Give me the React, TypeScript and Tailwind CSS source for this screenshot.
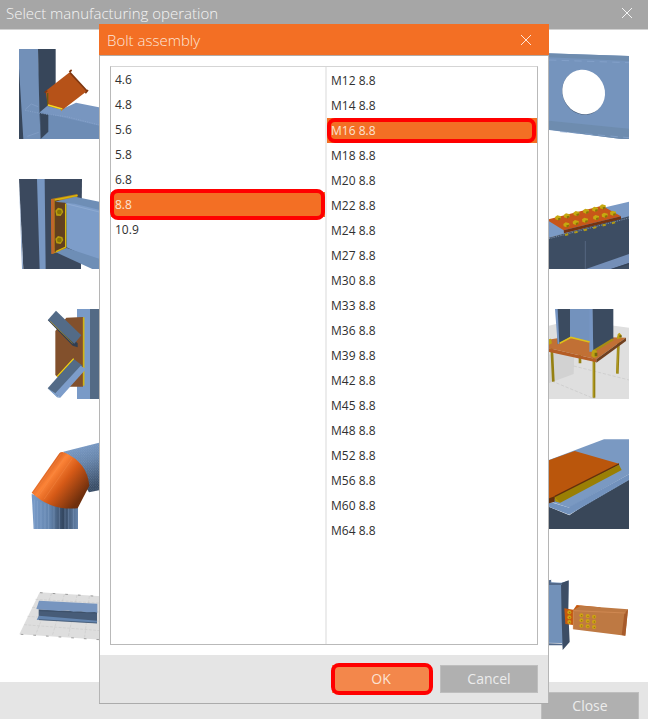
import { useState } from "react";
import type { ReactNode } from "react";

const GRADES = ["4.6", "4.8", "5.6", "5.8", "6.8", "8.8", "10.9"];
const DIAMETERS = [12, 14, 16, 18, 20, 22, 24, 27, 30, 33, 36, 39, 42, 45, 48, 52, 56, 60, 64];

function Thumb({ label, viewBox, children }: { label: string; viewBox: string; children: ReactNode }) {
  return (
    <button type="button" aria-label={label} className="block size-[90px]">
      <svg viewBox={viewBox} className="size-full" aria-hidden="true">
        {children}
      </svg>
    </button>
  );
}

function CloseIcon() {
  return (
    <svg viewBox="0 0 12 12" className="size-3" fill="none" stroke="currentColor" aria-hidden="true">
      <path d="M1 1 11 11M11 1 1 11" />
    </svg>
  );
}

function StubThumb() {
  return (
    <Thumb label="Stub" viewBox="57 27 270 270">
      <path fill="#7290b8" d="M57 27h58l7 271H57z" />
      <path fill="#37465a" d="M57 85l13 213H57zM114 27h53v135l-22 40v75l-23 21-4-90z" />
      <path fill="#7896c0" d="M120 216l25-21 42 12 41-19 99 20v90H122z" />
      <path fill="#6d8cb5" d="M120 216l207 48v34H122z" />
      <path fill="#37465a" d="M120 219l25 5v51l-23 22z" />
      <path fill="none" stroke="#91abd0" strokeDasharray="3 4" strokeWidth="2" d="M76 211l44 9 80 10 110 28" />
      <path fill="none" stroke="#86a1c8" strokeWidth="2" d="M76 208l18-16 20 8M82 289l34-12" />
      <path fill="#b65218" d="M137 153l72-56 52 56-73 56-45-11z" />
      <path fill="none" stroke="#803811" strokeWidth="5" d="M134 158l8-6M208 96l7-6M256 160l8-10M210 98l51 55" />
      <path fill="none" stroke="#675a15" strokeWidth="4" d="M143 159v35" />
      <path fill="none" stroke="#f1db24" strokeWidth="4" d="M144 195l43 12" />
      <path fill="#c78d22" d="M180 206l8 2-3 6z" />
    </Thumb>
  );
}

function OpeningThumb() {
  return (
    <Thumb label="Opening" viewBox="-3 27 270 270">
      <path fill="#7594bd" d="M-3 39l270 9v251l-40-4-230-29z" />
      <path fill="#6e8caf" d="M-3 39l270 9v15L-3 50zM-3 239l270 27v33l-30-3L-3 265z" />
      <path fill="none" stroke="#8aa6ce" strokeWidth="2" strokeDasharray="22 16" d="M27 60l240 8M60 275l207 18" />
      <ellipse cx="129" cy="158" rx="61" ry="68" fill="#465b76" transform="rotate(-28 129 158)" />
      <ellipse cx="131" cy="156" rx="63" ry="68" fill="#fff" transform="rotate(-28 131 156)" />
    </Thumb>
  );
}

function EndPlateThumb() {
  return (
    <Thumb label="End plate" viewBox="57 27 270 270">
      <path fill="#3b495e" d="M57 27h189l-3 271H70z" />
      <path fill="#7897c2" d="M111 27h23l3 271h-18zM57 29l12 269h-3z" />
      <path fill="#bd8316" d="M153 87l79-15v13l-35 10v145l-42 12z" />
      <path fill="#62401f" d="M164 88l31 8v138l-31 12z" />
      <path fill="#c0662c" d="M153 87l9 1v162l-8 2z" />
      <path fill="#7d9dc9" d="M199 98l128 2v192l-127-60z" />
      <path fill="#6e8eb6" d="M165 95l60-15 102 21v26l-103-26zM168 247l32-13 127 42v22h-48z" />
      <path fill="none" stroke="#96b0d6" strokeWidth="2" d="M198 101l100 25" />
      <path fill="none" stroke="#d7b80c" strokeWidth="4" d="M164 90l69-14M197 102v129l-29 14" />
      <g fill="#b69b0d">
        <path d="M166 122l8-9 12 3 4 10-8 12-13-1zM166 206l8-8 13 3 3 9-8 12-13-2z" />
      </g>
      <g fill="#887306">
        <circle cx="178" cy="126" r="7" />
        <circle cx="178" cy="210" r="7" />
      </g>
    </Thumb>
  );
}

function SpliceThumb() {
  return (
    <Thumb label="Plate to plate" viewBox="-3 -33 270 270">
      <path fill="#7b9ac5" d="M-3 98L267 35v45L-3 151z" />
      <path fill="#3d4d63" d="M-3 151L267 79v158H-3z" />
      <path fill="none" stroke="#91a8c7" strokeDasharray="4 3" strokeWidth="2" d="M27 146L267 84" />
      <path fill="#748fb8" d="M138 237l129-45v27l-54 18z" />
      <path fill="#35445a" d="M213 237l54-18v4l-42 14z" />
      <path stroke="#60738f" strokeWidth="2" d="M136 153v84" />
      <path fill="#c75619" d="M20 89l166-42 57 32-172 42z" />
      <path fill="#743211" d="M71 121l172-42v8L72 130z" />
      {[
        [54, 84], [80, 78], [109, 71], [138, 64], [165, 58], [188, 51],
        [79, 105], [107, 98], [135, 91], [168, 83], [194, 76], [219, 70],
      ].map(([x, y]) => (
        <g key={`${x}-${y}`}>
          <path fill="#c6a910" d={`M${x - 9} ${y - 3}l7-5 11 3v7l-8 5-9-3z`} />
          <path fill="#887408" d={`M${x} ${y + 1}l8-2v5l-7 4z`} />
        </g>
      ))}
      <path fill="none" stroke="#b29a15" strokeWidth="6" strokeDasharray="10 19" d="M75 135l151-38" />
    </Thumb>
  );
}

function GussetThumb() {
  return (
    <Thumb label="Gusset plate" viewBox="57 27 270 270">
      <path fill="#799ac7" d="M231 27h39v273h-39z" />
      <path fill="#536a85" d="M270 27h57v273h-57z" />
      <path fill="#82502c" d="M166 93l33-40 50-2v209h-45l-38-35z" />
      <path stroke="#d1b414" strokeWidth="5" d="M251 52v205" />
      <path fill="#303e50" d="M143 60l9-2 81 72v12l-15-5z" />
      <path fill="#536b87" d="M144 59l24-27 76 74-21 25z" />
      <path fill="none" stroke="#bf9b1b" strokeWidth="2" d="M151 64l67 66" />
      <path fill="#536b87" d="M143 265l78-88 27 20-75 95z" />
      <path fill="#7d9dca" d="M166 280l76-83 16 10-78 87z" />
      <path fill="#82a3ce" d="M143 265l23 15 14 14-9-2z" />
      <path fill="none" stroke="#f0d515" strokeWidth="4" d="M171 230l50-54" />
    </Thumb>
  );
}

function AnchorThumb() {
  return (
    <Thumb label="Base plate" viewBox="-3 27 270 270">
      <path fill="#dfdfdf" d="M-3 85l98-25 172 23v215H-3z" />
      <path fill="#d2d2d2" d="M-3 169l106-19-2 72L-3 260z" />
      <path fill="none" stroke="#c7c7c7" strokeWidth="2" strokeDasharray="10 5" d="M101 198l166 42M35 243l130 54" />
      <g stroke="#958012" strokeWidth="8">
        <path d="M35 140l5 105M162 170v123M236 110l-4 111M120 160v30" />
      </g>
      <path stroke="#c2ab25" strokeWidth="2" d="M160 185v107M235 125l-4 95" />
      <path fill="#c17035" d="M-3 124l96-16 165 5-89 65L-3 137z" />
      <path fill="#b55d25" d="M-3 137l172 41v9L-3 149z" />
      <path fill="#70401f" d="M169 178l89-65v10l-89 65z" />
      <path fill="#7392bd" d="M88 27h70v100l-70-15z" />
      <path fill="#3b4b60" d="M50 27h40v84l-37 22zM157 27h63v89l-62 39z" />
      <path fill="#7696c4" d="M45 27h8l5 104-5 2zM148 27h9l3 128h-12z" />
      <path fill="none" stroke="#ddc11a" strokeWidth="5" d="M59 130l34-18 56 14" />
      <path fill="none" stroke="#a78d15" strokeWidth="7" d="M165 151l54-33" />
      <path fill="#bda313" d="M156 152l7-4 7 5 2 17-10 3-8-5zM233 103l5-5 6 6v10l-13 3zM25 118l8-2 3 14-9 4z" />
      <path fill="#776611" d="M164 158h8v11h-8zM238 106h7v6h-7z" />
    </Thumb>
  );
}

function MiterThumb() {
  return (
    <Thumb label="Miter cut" viewBox="57 27 270 270">
      <defs>
        <linearGradient id="sleeve" gradientUnits="userSpaceOnUse" x1="113" y1="120" x2="233" y2="215">
          <stop offset="0" stopColor="#bc4610" />
          <stop offset=".28" stopColor="#fc8337" />
          <stop offset=".55" stopColor="#d65a17" />
          <stop offset="1" stopColor="#6f2f0d" />
        </linearGradient>
        <linearGradient id="pipe">
          <stop offset="0" stopColor="#789bc9" />
          <stop offset=".4" stopColor="#6384ad" />
          <stop offset=".68" stopColor="#33465f" />
          <stop offset="1" stopColor="#6685ad" />
        </linearGradient>
        <linearGradient id="elbow" x2=".3" y2="1">
          <stop offset="0" stopColor="#83a5d3" />
          <stop offset=".5" stopColor="#6583a9" />
          <stop offset="1" stopColor="#34475f" />
        </linearGradient>
        <pattern id="mesh" width="7" height="8" patternUnits="userSpaceOnUse">
          <path d="M0 2h3M4 6h3" stroke="#afc5e2" strokeWidth="1" opacity=".8" />
        </pattern>
      </defs>
      <path fill="url(#elbow)" d="M190 65l137-34v144l-60 12z" />
      <path fill="url(#mesh)" d="M190 65l137-34v144l-60 12z" />
      <path fill="url(#pipe)" d="M95 192l139 40v66H101z" />
      <path stroke="#9bb5d9" strokeWidth="2" opacity=".5" d="M103 209v88M112 212v85M123 217v80M135 220v77M146 222v75M162 229v68M178 231v66M195 234v63M206 234v63M220 234v63" />
      <path fill="url(#sleeve)" d="M95 188l83-118q6-7 17-2 67 30 73 99l-35 68q-82 7-138-47z" />
      <path stroke="#f69150" strokeWidth="2" opacity=".5" d="M101 190l82-118M115 199l82-122M132 208l84-122" />
    </Thumb>
  );
}

function ContactThumb() {
  return (
    <Thumb label="Cover plate" viewBox="-3 27 270 270">
      <path fill="#394759" d="M-3 218l91 38 179-121v163H-3z" />
      <path fill="#7a99c2" d="M-3 101L192 28h75v105L88 233-3 204z" />
      <path fill="#7292bd" d="M-3 219l31-4 60 18v21zM88 231l179-98v17L88 254z" />
      <path stroke="#a4bbd9" strokeWidth="1" strokeDasharray="4 3" d="M89 252l178-103" />
      <path fill="#ba560c" d="M-3 101l107-38 133 38L44 201-3 216z" />
      <path fill="#62300c" d="M-3 216l47-17v16L-3 228zM44 197l193-97v5L44 206z" />
      <path fill="#9a7f04" d="M44 202l193-98 8 16L61 218l-15-4z" />
      <path fill="#ad9005" d="M44 202l17 16-15-4z" />
    </Thumb>
  );
}

function MemberThumb() {
  return (
    <Thumb label="Work plane" viewBox="57 417 270 270">
      <path fill="#dedede" d="M119 487l208 13v131L58 613z" />
      <path fill="none" stroke="#b9b9b9" strokeWidth="1" strokeDasharray="9 4" d="M106 508l221 13M96 532l231 16M82 559l245 17M72 584l255 20M155 490l-48 124M193 493l-36 124M231 495l-26 125M268 498l-14 124" />
      <path fill="none" stroke="#777" strokeWidth="2" strokeDasharray="8 30" d="M120 488l207 13M62 613l265 18" />
      <path fill="#475c78" d="M116 538l175 8v32l-175-10z" />
      <path fill="#7795bf" d="M117 512l175 9v29l-8-4-24 2-16-4-24 2-16-5-28 2-67-6z" />
      <path fill="#6485af" d="M117 557l174 15v8l-181-11z" />
      <path stroke="#384a61" strokeWidth="2" d="M117 542l174 7M117 569l174 10" />
    </Thumb>
  );
}

function FinPlateThumb() {
  return (
    <Thumb label="Fin plate" viewBox="-3 417 270 270">
      <path fill="#7291b9" d="M-3 446l37 6v5l30 1 22-6v15l-5 169-11 20-4-17-69-1z" />
      <path fill="#3c4d65" d="M63 460l23-9-1 95 4 90-21 24-3-93z" />
      <path fill="#52698a" d="M27 451l7-2-3 9 35 2v5H27zM27 640l42 1-2 5H27z" />
      <path fill="#c6590f" d="M73 535l27 4 10-14 69 7 12 6-90 3-2 44-23-3z" />
      <path fill="#be7943" d="M99 541l23-14 142 11-8 79-157-19z" />
      <path fill="#a75b2b" d="M264 538l-8 79-11-2 8-64z" />
      <path fill="none" stroke="#d89059" strokeWidth="2" d="M101 542l156 7M100 545v52" />
      {[
        [88, 547], [88, 562], [88, 576],
        [124, 556], [143, 558], [162, 560],
        [124, 571], [143, 573], [162, 575],
        [124, 587], [143, 589], [162, 591],
      ].map(([x, y]) => (
        <g key={`${x}-${y}`}>
          <circle cx={x} cy={y} r="6" fill="#cfa314" />
          <circle cx={x + 1} cy={y + 1} r="2" fill="#8a7408" />
        </g>
      ))}
    </Thumb>
  );
}

type OptionListProps = {
  label: string;
  options: string[];
  value: string;
  onChange: (value: string) => void;
  markClass: string;
  className: string;
};

function OptionList({ label, options, value, onChange, markClass, className }: OptionListProps) {
  return (
    <ul aria-label={label} className={className}>
      {options.map((option) => {
        const selected = option === value;
        return (
          <li key={option} className="relative">
            <button
              type="button"
              aria-pressed={selected}
              onClick={() => onChange(option)}
              className={`block h-[25px] w-full px-1 text-left text-xs leading-[25px] ${
                selected ? "bg-[#f36f24] text-[#fbe3d5]" : "text-[#303030]"
              }`}
            >
              {option}
            </button>
            {selected && <span className={`pointer-events-none absolute rounded-lg border-4 border-[#ff0000] ${markClass}`} />}
          </li>
        );
      })}
    </ul>
  );
}

function BoltDialog() {
  const [grade, setGrade] = useState("8.8");
  const [size, setSize] = useState("M16 8.8");

  return (
    <div
      role="dialog"
      aria-labelledby="bolt-title"
      className="w-full max-w-[450px] border-b border-[#ababab] bg-white"
    >
      <header className="flex h-8 items-center justify-between border-b border-[#b5aaa4] bg-[#f36f24] pr-[17px] pl-2 text-[#fde6d9]">
        <h2 id="bolt-title" className="text-[15px] leading-6 font-light">Bolt assembly</h2>
        <button type="button" aria-label="Close bolt assembly">
          <CloseIcon />
        </button>
      </header>
      <div className="border-x border-[#b5b5b5]">
        <div className="p-2.5">
          <div className="grid min-h-[579px] grid-cols-[215px_1fr] border border-[#b9b9b9] border-t-[#d5d5d5]">
            <OptionList
              label="Bolt grade"
              options={GRADES}
              value={grade}
              onChange={setGrade}
              markClass="-left-px right-0 -inset-y-[3px]"
              className="border-r border-[#ececec]"
            />
            <OptionList
              label="Bolt size"
              options={DIAMETERS.map((d) => `M${d} 8.8`)}
              value={size}
              onChange={setSize}
              markClass="inset-y-0 left-0 right-px"
              className="border-l border-[#ececec] pt-px"
            />
          </div>
        </div>
        <footer className="flex justify-end gap-2.5 bg-[#e5e5e5] p-2.5 text-sm">
          <div className="relative">
            <button type="button" className="h-7 w-[98px] bg-[#f3874b] text-[#fbe3d5]">OK</button>
            <span className="pointer-events-none absolute -inset-y-0.5 -right-[3px] -left-px rounded-lg border-4 border-[#ff0000]" />
          </div>
          <button type="button" className="h-7 w-[98px] border border-[#bebebe] bg-[#b0b0b0] text-[#ececec]">
            Cancel
          </button>
        </footer>
      </div>
    </div>
  );
}

export default function App() {
  return (
    <main className="relative flex h-screen flex-col overflow-hidden bg-white font-['Open_Sans','Noto_Sans',sans-serif]">
      <header className="flex h-[30px] shrink-0 items-center justify-between border-b border-[#d2d2d2] bg-[#a6a6a6] pr-[15px] pl-1.5 text-[#f4f4f4]">
        <h1 className="pb-1 text-[15px] leading-6 font-light">Select manufacturing operation</h1>
        <button type="button" aria-label="Close window" className="pb-1">
          <CloseIcon />
        </button>
      </header>
      <section className="flex shrink-0 justify-between px-[19px] pt-[19px] pb-[23px]">
        <div className="flex flex-col gap-10">
          <StubThumb />
          <EndPlateThumb />
          <GussetThumb />
          <MiterThumb />
          <MemberThumb />
        </div>
        <div className="flex flex-col gap-10">
          <OpeningThumb />
          <SpliceThumb />
          <AnchorThumb />
          <ContactThumb />
          <FinPlateThumb />
        </div>
      </section>
      <footer className="flex shrink-0 justify-end bg-[#e5e5e5] px-[9px] py-2.5 text-sm">
        <button type="button" className="h-7 w-[98px] border border-[#bebebe] bg-[#b0b0b0] text-[#ececec]">
          Close
        </button>
      </footer>
      <div className="absolute inset-x-0 top-6 flex justify-center">
        <BoltDialog />
      </div>
    </main>
  );
}
